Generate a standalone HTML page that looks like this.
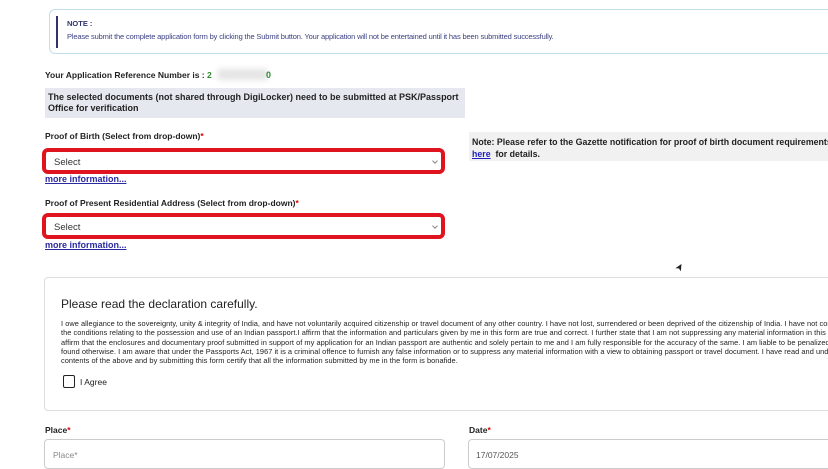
<!DOCTYPE html>
<html><head><meta charset="utf-8"><style>
*{margin:0;padding:0;box-sizing:border-box}
body{width:828px;height:464px;overflow:hidden;background:#fff;font-family:"Liberation Sans",Arial,sans-serif;position:relative;color:#222}
.a{position:absolute;white-space:nowrap}
.sel{position:absolute;left:42px;width:403px;height:26px;border:4px solid #e0141e;border-radius:6px;background:#fff;font-size:9.5px;color:#333;padding:5px 0 0 8px}
.sel:after{content:"";position:absolute;right:4px;top:7px;width:3px;height:3px;border-right:1px solid #888;border-bottom:1px solid #888;transform:rotate(45deg)}
.more{position:absolute;left:45px;font-size:9px;font-weight:bold;color:#2a2aa0;text-decoration:underline}
.lbl{font-size:8.5px;font-weight:bold;color:#222}
.decl{font-size:7.4px;color:#222;line-height:9.3px}
</style></head><body>
<div class="a" style="left:49px;top:9px;width:800px;height:45px;border:1px solid #bfe0ea;border-radius:6px"></div>
<div class="a" style="left:56px;top:16px;width:2px;height:32px;background:#2e3470"></div>
<div class="a" style="left:67px;top:19px;font-size:7.5px;font-weight:bold;color:#2e3470">NOTE :</div>
<div class="a" style="left:67px;top:32px;font-size:7.5px;color:#3a3f80;letter-spacing:-0.15px">Please submit the complete application form by clicking the Submit button. Your application will not be entertained until it has been submitted successfully.</div>

<div class="a lbl" style="left:45px;top:70px">Your Application Reference Number is : <span style="color:#2e8b2e">2</span></div>
<div class="a" style="left:218px;top:69px;width:50px;height:11px;background:#e4e4e4;filter:blur(3px)"></div>
<div class="a" style="left:266px;top:70px;font-size:9px;font-weight:bold;color:#2e8b2e">0</div>

<div class="a" style="left:45px;top:88px;width:420px;height:30px;background:#e6e8f0"></div>
<div class="a lbl" style="left:48px;top:92px;line-height:11px;font-size:9px">The selected documents (not shared through DigiLocker) need to be submitted at PSK/Passport<br>Office for verification</div>

<div class="a lbl" style="left:45px;top:131px">Proof of Birth (Select from drop-down)<span style="color:#d00">*</span></div>
<div class="sel" style="top:148px">Select</div>
<div class="more" style="top:174px">more information...</div>

<div class="a" style="left:469px;top:132px;width:370px;height:29px;background:#f1f1f1"></div>
<div class="a lbl" style="left:472px;top:136px;font-size:8.8px;line-height:12px">Note: Please refer to the Gazette notification for proof of birth document requirements<br><span style="color:#2020c0;text-decoration:underline">here</span>&nbsp; for details.</div>

<div class="a lbl" style="left:45px;top:198px">Proof of Present Residential Address (Select from drop-down)<span style="color:#d00">*</span></div>
<div class="sel" style="top:213px">Select</div>
<div class="more" style="top:240px">more information...</div>

<div class="a" style="left:676px;top:262px;font-size:10px;color:#222;transform:rotate(-60deg)">➤</div>

<div class="a" style="left:44px;top:277px;width:800px;height:134px;border:1px solid #ddd;border-radius:4px"></div>
<div class="a" style="left:61px;top:297px;font-size:12px;color:#222">Please read the declaration carefully.</div>
<div class="a decl" style="left:61px;top:319px;letter-spacing:0.05px">I owe allegiance to the sovereignty, unity &amp; integrity of India, and have not voluntarily acquired citizenship or travel document of any other country. I have not lost, surrendered or been deprived of the citizenship of India. I have not contravened<br>the conditions relating to the possession and use of an Indian passport.I affirm that the information and particulars given by me in this form are true and correct. I further state that I am not suppressing any material information in this regard. I f<br>affirm that the enclosures and documentary proof submitted in support of my application for an Indian passport are authentic and solely pertain to me and I am fully responsible for the accuracy of the same. I am liable to be penalized or prose<br>found otherwise. I am aware that under the Passports Act, 1967 it is a criminal offence to furnish any false information or to suppress any material information with a view to obtaining passport or travel document. I have read and understood th<br>contents of the above and by submitting this form certify that all the information submitted by me in the form is bonafide.</div>
<div class="a" style="left:63px;top:375px;width:12px;height:13px;border:1.5px solid #222;border-radius:2px"></div>
<div class="a" style="left:80px;top:377px;font-size:8.5px">I Agree</div>

<div class="a lbl" style="left:45px;top:425px">Place<span style="color:#d00">*</span></div>
<div class="a lbl" style="left:469px;top:425px">Date<span style="color:#d00">*</span></div>
<div class="a" style="left:44px;top:439px;width:401px;height:30px;border:1px solid #ccc;border-radius:4px"></div>
<div class="a" style="left:53px;top:450px;font-size:8.5px;color:#888">Place*</div>
<div class="a" style="left:468px;top:439px;width:380px;height:30px;border:1px solid #ccc;border-radius:4px"></div>
<div class="a" style="left:476px;top:450px;font-size:8.5px;color:#555">17/07/2025</div>
</body></html>
